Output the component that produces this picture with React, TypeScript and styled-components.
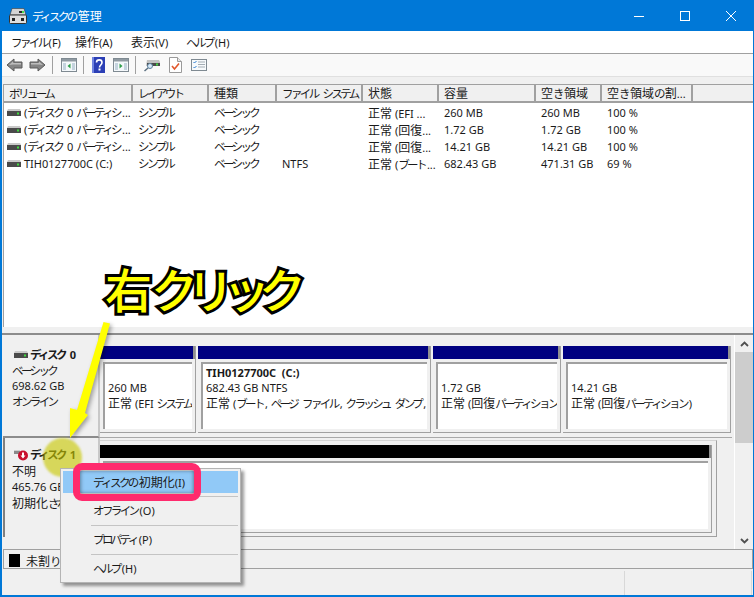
import React from 'react';
import styled, { createGlobalStyle } from 'styled-components';

const Global = createGlobalStyle`
  html, body { margin: 0; padding: 0; background: #fff; overflow: hidden; }
  * { box-sizing: border-box; }
`;

const Window = styled.div`
  position: relative;
  width: 754px;
  height: 597px;
  display: flex;
  flex-direction: column;
  border: solid #0078d7;
  border-width: 0 1px 2px 2px;
  background: #f0f0f0;
  color: #1a1a1a;
  font-family: "Noto Sans", "Noto Sans CJK JP", sans-serif;
  font-size: 11px;
  overflow: hidden;
`;
const TitleBar = styled.div`
  height: 31px;
  margin: 0 -1px 0 -2px;
  padding-left: 9px;
  background: #0078d7;
  color: #fff;
  display: flex;
  align-items: center;
  gap: 5px;
`;
const TitleText = styled.span`
  font-size: 12px;
`;
const WinButtons = styled.div`
  margin-left: auto;
  display: flex;
  height: 100%;
`;
const WinButton = styled.div`
  width: 46px;
  height: 100%;
  display: flex;
  align-items: center;
  justify-content: center;
`;
const MenuBar = styled.div`
  height: 23px;
  padding: 0 0 1px 9px;
  background: #fff;
  border-bottom: 1px solid #a0a0a0;
  display: flex;
  align-items: center;
`;
const MenuItem = styled.span<{ $w: number }>`
  width: ${(p) => p.$w}px;
`;
const Toolbar = styled.div`
  height: 22px;
  padding-left: 4px;
  background: #f9f9f9;
  display: flex;
  align-items: center;
`;
const Sep = styled.div<{ $r?: number }>`
  width: 1px;
  height: 18px;
  background: #a0a0a0;
  margin: 0 ${(p) => p.$r ?? 8}px 0 6px;
`;
const ToolIcon = styled.div<{ $w?: number; $m?: number; $l?: number }>`
  width: ${(p) => p.$w ?? 16}px;
  height: 18px;
  margin-right: ${(p) => p.$m ?? 0}px;
  margin-left: ${(p) => p.$l ?? 0}px;
  display: flex;
  align-items: center;
  justify-content: center;
`;
const Gap = styled.div`
  height: 8px;
  background: #f0f0f0;
  border-top: 1px solid #e0e0e0;
`;
const ListPane = styled.div`
  height: 243px;
  margin-left: 1px;
  background: #fff;
  border-top: 1px solid #a0a0a0;
  border-left: 1px solid #a0a0a0;
`;
const Header = styled.div`
  display: flex;
  height: 18px;
`;
const HeadCell = styled.div<{ $w: number }>`
  width: ${(p) => p.$w}px;
  padding-left: 5px;
  background: #f0f0f0;
  border-right: 2px solid #a0a0a0;
  border-bottom: 2px solid #a0a0a0;
  line-height: 16px;
  white-space: nowrap;
  overflow: hidden;
  flex: none;
`;
const HeadFill = styled(HeadCell)`
  flex: 1;
  border-right: 0;
`;
const Rows = styled.div`
  padding-top: 1px;
`;
const Row = styled.div`
  display: flex;
  height: 17px;
  line-height: 17px;
`;
const Cell = styled.div<{ $w: number }>`
  width: ${(p) => p.$w}px;
  padding-left: 5px;
  white-space: nowrap;
  overflow: hidden;
  flex: none;
`;
const VolumeCell = styled(Cell)`
  display: flex;
  align-items: center;
  gap: 3px;
  padding-left: 3px;
`;
const Splitter = styled.div`
  height: 8px;
  background: #f0f0f0;
  border-bottom: 2px solid #8c8c8c;
`;
const DiskPane = styled.div`
  height: 215px;
  display: flex;
  border-bottom: 1px solid #a0a0a0;
  margin-left: 1px;
`;
const DiskList = styled.div`
  flex: 1;
  min-width: 0;
`;
const DiskRow = styled.div<{ $h: number }>`
  display: flex;
  height: ${(p) => p.$h}px;
`;
const DiskLabel = styled.div<{ $line?: boolean; $dark?: boolean }>`
  width: 97px;
  flex: none;
  padding: ${(p) => (p.$dark ? 9 : 12)}px 0 0 ${(p) => (p.$dark ? 7 : 9)}px;
  line-height: 15.5px;
  background: #f0f0f0;
  border-right: 2px solid #c8c8c8;
  border-bottom: ${(p) => (p.$line ? '2px solid #8c8c8c' : '0')};
  border-left: ${(p) => (p.$dark ? '2px solid #808080' : '0')};
  white-space: nowrap;
  overflow: hidden;
`;
const DiskName = styled.div`
  display: flex;
  align-items: center;
  height: 15.5px;
  gap: 2px;
  font-weight: 700;
  margin-left: 2px;
`;
const Partitions = styled.div<{ $open?: boolean }>`
  display: flex;
  gap: 2px;
  padding-top: ${(p) => (p.$open ? 2 : 11)}px;
  flex: 1;
  border-bottom: ${(p) => (p.$open ? '0' : '1px solid #a8a8a8')};
  align-items: flex-start;
`;
const Frame = styled.div`
  width: 617px;
  height: 97px;
  padding-top: 4px;
  border-top: 1px solid #d4d4d4;
  border-right: 1px solid #a0a0a0;
  border-bottom: 1px solid #a0a0a0;
`;
const Partition = styled.div<{ $w: number; $h?: number }>`
  width: ${(p) => p.$w}px;
  height: ${(p) => p.$h ?? 87}px;
  flex: none;
  display: flex;
  flex-direction: column;
  border-right: 1px solid #a0a0a0;
  border-bottom: 1px solid #a0a0a0;
`;
const PartBar = styled.div<{ $c: string }>`
  height: 13px;
  flex: none;
  background: ${(p) => p.$c};
  border-right: 2px solid #909090;
`;
const PartBody = styled.div`
  flex: 1;
  margin: 3px;
  padding: 1px 3px 0 3px;
  background: #fff;
  border-top: 2px solid #a0a0a0;
  border-left: 2px solid #a0a0a0;
  line-height: 15px;
  white-space: nowrap;
  overflow: hidden;
`;
const PartSpacer = styled.div`
  height: 15px;
`;
const PartTitle = styled.div`
  font-weight: 700;
  white-space: pre;
`;
const Scrollbar = styled.div`
  width: 19px;
  margin-left: 2px;
  flex: none;
  display: flex;
  flex-direction: column;
  align-items: center;
  border-left: 1px solid #fff;
`;
const ScrollArrow = styled.div`
  height: 17px;
  display: flex;
  align-items: center;
  justify-content: center;
`;
const Thumb = styled.div`
  width: 100%;
  height: 91px;
  background: #cdcdcd;
`;
const ScrollTrack = styled.div`
  flex: 1;
`;
const Legend = styled.div`
  height: 19px;
  margin-left: 1px;
  padding: 2px 0 0 5px;
  display: flex;
  align-items: center;
  gap: 6px;
  border-bottom: 1px solid #a0a0a0;
  border-left: 1px solid #a0a0a0;
  border-right: 1px solid #a0a0a0;
`;
const Swatch = styled.div`
  width: 11px;
  height: 13px;
  background: #000;
`;
const StatusBar = styled.div`
  flex: 1;
  margin-top: 2px;
  display: flex;
  background: #f0f0f0;
`;
const StatusCell = styled.div<{ $w: number }>`
  width: ${(p) => p.$w}px;
  border-right: 1px solid #d8d8d8;
`;

/* annotations painted over the screenshot */
const Callout = styled.div`
  position: absolute;
  left: 103px;
  top: 255px;
  font-family: "Noto Sans CJK JP", sans-serif;
  font-weight: 500;
  font-size: 47px;
  line-height: 66px;
  color: #ffff00;
  -webkit-text-stroke: 6px #000;
  paint-order: stroke fill;
  white-space: nowrap;
`;
const CalloutKana = styled.span`
  letter-spacing: -11px;
  margin-left: -1px;
`;
const Arrow = styled.svg`
  position: absolute;
  left: 58px;
  top: 316px;
  filter: drop-shadow(2px 2px 2px rgba(0, 0, 0, 0.35));
`;
const Spot = styled.div`
  position: absolute;
  left: 41px;
  top: 438px;
  width: 39px;
  height: 39px;
  border-radius: 50%;
  background: rgba(200, 200, 0, 0.62);
  filter: blur(1px);
`;
const Menu = styled.div`
  position: absolute;
  left: 58px;
  top: 468px;
  width: 181px;
  height: 115px;
  padding: 2px;
  background: #f0f0f0;
  border: 1px solid #b4b4b4;
  box-shadow: 3px 3px 3px rgba(0, 0, 0, 0.4);
`;
const MenuRow = styled.div<{ $active?: boolean }>`
  height: 22px;
  padding-left: 30px;
  line-height: 21px;
  background: ${(p) => (p.$active ? '#91c9f7' : 'transparent')};
`;
const MenuSep = styled.div`
  height: 1px;
  margin: 3px 0 3px 28px;
  background: #c4c4c4;
`;
const PinkBox = styled.div`
  position: absolute;
  left: 71px;
  top: 463px;
  width: 128px;
  height: 38px;
  border: 7px solid #ff2a6d;
  border-radius: 9px;
  box-shadow: inset 0 0 4px rgba(0, 0, 0, 0.55);
`;

const KanaRun = styled.span`
  font-family: "Noto Sans CJK JP", sans-serif;
  font-size: 11.5px;
  letter-spacing: -2.6px;
  margin-right: 2px;
`;
const KanjiRun = styled.span`
  font-family: "Noto Sans CJK JP", sans-serif;
  font-size: 12px;
`;

// Meiryo UI has narrow kana, so text gets split into runs
function T({ s }: { s: string }) {
  const parts = s.match(/[\u3040-\u30ff]+|[\u4e00-\u9fff]+|[^\u3040-\u30ff\u4e00-\u9fff]+/g) ?? [];
  return (
    <span>
      {parts.map((p, i) => {
        if (/^[\u3040-\u30ff]/.test(p)) return <KanaRun key={i}>{p}</KanaRun>;
        if (/^[\u4e00-\u9fff]/.test(p)) return <KanjiRun key={i}>{p}</KanjiRun>;
        return <span key={i}>{p}</span>;
      })}
    </span>
  );
}

function DiskIcon() {
  return (
    <svg width="14" height="7" viewBox="0 0 14 7">
      <path d="M1 0h12l1 2H0z" fill="#c9c9c9" />
      <rect x="0" y="2" width="14" height="5" fill="#4a4a4a" />
      <rect x="10" y="3.5" width="2" height="2" fill="#3fdc3f" />
    </svg>
  );
}

function DiskErrorIcon() {
  return (
    <svg width="14" height="12" viewBox="0 0 14 12">
      <path d="M0 1h6v1H0z" fill="#cfcfcf" />
      <path d="M0 2h6v3H0z" fill="#8a8a8a" />
      <circle cx="9" cy="6.500" r="5" fill="#c8102e" />
      <path d="M8 3.500h2v3h1.500L9 9.500 6.500 6.500H8z" fill="#fff" />
    </svg>
  );
}

function TitleIcon() {
  return (
    <svg width="18" height="16" viewBox="0 0 18 16">
      <path d="M3 0.500h12l2 6.500H1z" fill="#d4d4d4" stroke="#3c3c3c" strokeWidth="0.600" />
      <rect x="10" y="3" width="5" height="2" fill="#2c2c2c" />
      <rect x="13" y="3" width="2" height="2" fill="#4be04b" />
      <rect x="0.500" y="7" width="17" height="8.500" rx="1" fill="#dedede" stroke="#333" />
      <rect x="3" y="10" width="3" height="3" fill="#222" />
      <rect x="12" y="10" width="3" height="3" fill="#222" />
    </svg>
  );
}

function NavArrow({ flip }: { flip?: boolean }) {
  return (
    <svg width="17" height="14" viewBox="0 0 17 14" style={flip ? { transform: 'scaleX(-1)' } : undefined}>
      <path d="M1 7l7-6v3h8v6H8v3z" fill="#858585" stroke="#5a5a5a" strokeWidth="1" />
      <path d="M3 7l4-3.400V5h8v1.500H7z" fill="#bdbdbd" />
    </svg>
  );
}

function PaneIcon({ glyph }: { glyph: 'left' | 'right' }) {
  return (
    <svg width="16" height="14" viewBox="0 0 16 14">
      <rect x="0.500" y="0.500" width="15" height="13" fill="#f4f8fb" stroke="#7f8a92" />
      <rect x="1" y="1" width="14" height="2.500" fill="#8f9aa2" />
      <rect x="2" y="5" width="3" height="7" fill="#c4d3de" />
      <rect x="11" y="5" width="3" height="7" fill="#c4d3de" />
      {glyph === 'left' ? <path d="M9.500 5.500v5L6.500 8z" fill="#2e9e4a" /> : <path d="M6.500 5.500v5L9.500 8z" fill="#2e9e4a" />}
    </svg>
  );
}

function HelpIcon() {
  return (
    <svg width="13" height="16" viewBox="0 0 13 16">
      <rect width="13" height="16" fill="#2b3fb5" />
      <rect x="0" y="0" width="2" height="16" fill="#6f83e0" />
      <path d="M4.500 5.500c0-3.500 5.500-3.500 5.500 0 0 2.500-2.500 2.500-2.500 5" fill="none" stroke="#fff" strokeWidth="1.600" />
      <rect x="6.500" y="11.500" width="2" height="2" fill="#fff" />
    </svg>
  );
}

function ScanIcon() {
  return (
    <svg width="16" height="14" viewBox="0 0 16 14">
      <path d="M3 2h12l1 2v4H2z" fill="#c2c2c2" />
      <rect x="3" y="5" width="13" height="3" fill="#4a4a4a" />
      <rect x="12" y="5.500" width="2" height="2" fill="#42d442" />
      <circle cx="6" cy="8" r="2.500" fill="#d7e9f7" stroke="#5b7f9c" />
      <path d="M4 10L0.500 13" stroke="#5b6f80" strokeWidth="1.500" />
    </svg>
  );
}

function CheckDocIcon() {
  return (
    <svg width="13" height="16" viewBox="0 0 13 16">
      <path d="M0.500 0.500h8l4 4v11h-12z" fill="#fff" stroke="#9a9a9a" />
      <path d="M8.500 0.500v4h4" fill="#e8e8e8" stroke="#9a9a9a" />
      <path d="M3 9l2.500 3L10 6.500" fill="none" stroke="#e2582c" strokeWidth="1.600" />
    </svg>
  );
}

function ChecklistIcon() {
  return (
    <svg width="16" height="12" viewBox="0 0 16 12">
      <rect x="0.500" y="0.500" width="15" height="11" fill="#f7fafc" stroke="#7f8a92" />
      <path d="M2.500 3l1 1 2-2M2.500 8l1 1 2-2" fill="none" stroke="#2f7fd0" />
      <path d="M7 3h7M7 5.500h7M7 8h7" stroke="#a4adb4" />
    </svg>
  );
}

function ChevronIcon({ down }: { down?: boolean }) {
  return (
    <svg width="9" height="6" viewBox="0 0 9 6">
      <path d={down ? 'M1 1l3.500 3.500L8 1' : 'M1 5l3.500-3.500L8 5'} fill="none" stroke="#505050" strokeWidth="1.800" />
    </svg>
  );
}

const columns = [129, 76, 68, 86, 76, 97, 66, 91];
const headings = ['ボリューム', 'レイアウト', '種類', 'ファイル システム', '状態', '容量', '空き領域', '空き領域の割...'];
const volumes = [
  ['(ディスク 0 パーティシ...', 'シンプル', 'ベーシック', '', '正常 (EFI ...', '260 MB', '260 MB', '100 %'],
  ['(ディスク 0 パーティシ...', 'シンプル', 'ベーシック', '', '正常 (回復...', '1.72 GB', '1.72 GB', '100 %'],
  ['(ディスク 0 パーティシ...', 'シンプル', 'ベーシック', '', '正常 (回復...', '14.21 GB', '14.21 GB', '100 %'],
  ['TIH0127700C (C:)', 'シンプル', 'ベーシック', 'NTFS', '正常 (ブート...', '682.43 GB', '471.31 GB', '69 %'],
];
const partitions = [
  { w: 96, lines: ['260 MB', '正常 (EFI システム'] },
  { w: 233, title: 'TIH0127700C  (C:)', lines: ['682.43 GB NTFS', '正常 (ブート, ページ ファイル, クラッシュ ダンプ, ^'] },
  { w: 128, lines: ['1.72 GB', '正常 (回復パーティション'] },
  { w: 168, lines: ['14.21 GB', '正常 (回復パーティション)'] },
];

export default function App() {
  return (
    <Window>
      <Global />
      <TitleBar>
        <TitleIcon />
        <TitleText><T s="ディスクの管理" /></TitleText>
        <WinButtons>
          <WinButton>
            <svg width="10" height="10" viewBox="0 0 10 10"><path d="M0 5.500h10" stroke="#fff" /></svg>
          </WinButton>
          <WinButton>
            <svg width="10" height="10" viewBox="0 0 10 10"><rect x="0.500" y="0.500" width="9" height="9" fill="none" stroke="#fff" /></svg>
          </WinButton>
          <WinButton>
            <svg width="10" height="10" viewBox="0 0 10 10"><path d="M0 0l10 10M10 0L0 10" stroke="#fff" /></svg>
          </WinButton>
        </WinButtons>
      </TitleBar>
      <MenuBar>
        <MenuItem $w={64}><T s="ファイル(F)" /></MenuItem>
        <MenuItem $w={56}><T s="操作(A)" /></MenuItem>
        <MenuItem $w={55}><T s="表示(V)" /></MenuItem>
        <MenuItem $w={60}><T s="ヘルプ(H)" /></MenuItem>
      </MenuBar>
      <Toolbar>
        <ToolIcon $w={17} $m={6}><NavArrow /></ToolIcon>
        <ToolIcon $w={17}><NavArrow flip /></ToolIcon>
        <Sep />
        <ToolIcon><PaneIcon glyph="left" /></ToolIcon>
        <Sep $r={8} />
        <ToolIcon $w={13}><HelpIcon /></ToolIcon>
        <ToolIcon $l={8}><PaneIcon glyph="right" /></ToolIcon>
        <Sep />
        <ToolIcon><ScanIcon /></ToolIcon>
        <ToolIcon $w={13} $l={9}><CheckDocIcon /></ToolIcon>
        <ToolIcon $l={9}><ChecklistIcon /></ToolIcon>
      </Toolbar>
      <Gap />
      <ListPane>
        <Header>
          {headings.map((h, i) => (
            <HeadCell key={h} $w={columns[i]}><T s={h} /></HeadCell>
          ))}
          <HeadFill $w={0} />
        </Header>
        <Rows>
          {volumes.map((v, r) => (
            <Row key={r}>
              {v.map((c, i) =>
                i === 0 ? (
                  <VolumeCell key={i} $w={columns[i]}><DiskIcon /><T s={c} /></VolumeCell>
                ) : (
                  <Cell key={i} $w={columns[i]}><T s={c} /></Cell>
                ),
              )}
            </Row>
          ))}
        </Rows>
      </ListPane>
      <Splitter />
      <DiskPane>
        <DiskList>
          <DiskRow $h={103}>
            <DiskLabel $line>
              <DiskName><DiskIcon /><T s="ディスク 0" /></DiskName>
              <div><T s="ベーシック" /></div>
              <div>698.62 GB</div>
              <div><T s="オンライン" /></div>
            </DiskLabel>
            <Partitions>
              {partitions.map((p, i) => (
                <Partition key={i} $w={p.w}>
                  <PartBar $c="#000080" />
                  <PartBody>
                    {p.title ? <PartTitle>{p.title}</PartTitle> : <PartSpacer />}
                    {p.lines.map((l) => <div key={l}><T s={l} /></div>)}
                  </PartBody>
                </Partition>
              ))}
            </Partitions>
          </DiskRow>
          <DiskRow $h={99}>
            <DiskLabel $dark>
              <DiskName><DiskErrorIcon /><T s="ディスク 1" /></DiskName>
              <div><T s="不明" /></div>
              <div>465.76 GB</div>
              <div><T s="初期化されていません" /></div>
            </DiskLabel>
            <Partitions $open>
              <Frame>
                <Partition $w={612} $h={88}>
                  <PartBar $c="#000" />
                  <PartBody />
                </Partition>
              </Frame>
            </Partitions>
          </DiskRow>
        </DiskList>
        <Scrollbar>
          <ScrollArrow><ChevronIcon /></ScrollArrow>
          <Thumb />
          <ScrollTrack />
          <ScrollArrow><ChevronIcon down /></ScrollArrow>
        </Scrollbar>
      </DiskPane>
      <Legend>
        <Swatch />
        <T s="未割り当て" />
      </Legend>
      <StatusBar>
        <StatusCell $w={623} />
        <StatusCell $w={127} />
      </StatusBar>

      <Callout>右<CalloutKana>クリック</CalloutKana></Callout>
      <Spot />
      <Arrow width="60" height="126" viewBox="0 0 60 126">
        <path d="M43.500 6L50 7.500 25 97l3 2-18 23V92l7 2z" fill="#ffff00" />
      </Arrow>
      <Menu>
        <MenuRow $active><T s="ディスクの初期化(I)" /></MenuRow>
        <MenuSep />
        <MenuRow><T s="オフライン(O)" /></MenuRow>
        <MenuSep />
        <MenuRow><T s="プロパティ(P)" /></MenuRow>
        <MenuSep />
        <MenuRow><T s="ヘルプ(H)" /></MenuRow>
      </Menu>
      <PinkBox />
    </Window>
  );
}
